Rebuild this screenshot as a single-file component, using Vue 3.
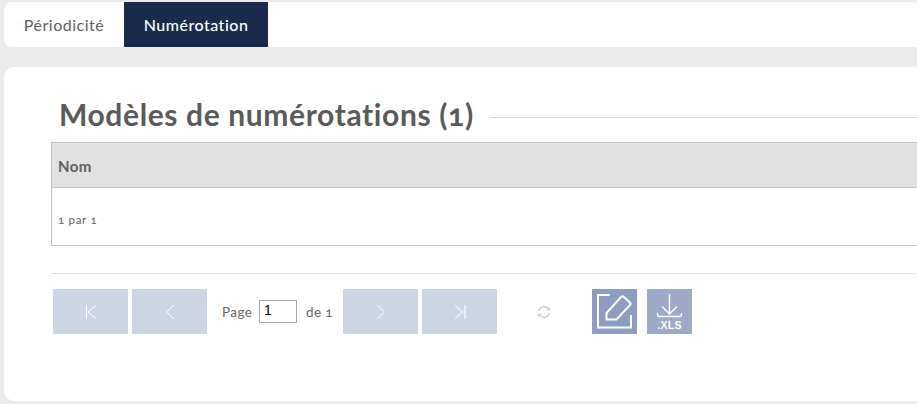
<script setup>
const tabs = [
  { label: 'Périodicité', active: false },
  { label: 'Numérotation', active: true }
]
</script>

<template>
  <div class="page">
    <nav class="tabs">
      <div v-for="t in tabs" :key="t.label" class="tab" :class="{ active: t.active }">{{ t.label }}</div>
    </nav>
    <main class="card">
      <div class="title-row">
        <h1 class="title">Modèles de numérotations (1)</h1>
        <div class="title-line"></div>
      </div>
      <div class="grid">
        <div class="grid-head">Nom</div>
        <div class="grid-foot">1 par 1</div>
      </div>
      <div class="sep"></div>
      <div class="pager">
        <button class="pg">
          <svg width="14" height="16" viewBox="0 0 14 16" fill="none" stroke="#fff" stroke-width="1"><path d="M2.500 1v14M12 1.500 4 8l8 6.500"/></svg>
        </button>
        <button class="pg">
          <svg width="14" height="16" viewBox="0 0 14 16" fill="none" stroke="#fff" stroke-width="1"><path d="M11 1 3.500 8l7.500 7"/></svg>
        </button>
        <span class="lbl page-lbl">Page</span>
        <input class="page-input" value="1" />
        <span class="lbl of-lbl">de 1</span>
        <button class="pg">
          <svg width="14" height="16" viewBox="0 0 14 16" fill="none" stroke="#fff" stroke-width="1"><path d="M3 1l7.500 7L3 15"/></svg>
        </button>
        <button class="pg">
          <svg width="14" height="16" viewBox="0 0 14 16" fill="none" stroke="#fff" stroke-width="1"><path d="M2 1.500 10 8l-8 6.500M12 1v14"/></svg>
        </button>
        <svg class="refresh" width="14" height="14" viewBox="0 0 16 16" fill="none" stroke="#b9c3d8" stroke-width="1.200">
          <path d="M2 7a6 6 0 0 1 10.500-3L14 5.500M14 2.500v3h-3"/>
          <path d="M14 9a6 6 0 0 1-10.500 3L2 10.500M2 13.500v-3h3"/>
        </svg>
        <button class="act edit">
          <svg width="45" height="45" viewBox="0 0 45 45" fill="none" stroke="#fff" stroke-width="2">
            <path d="M18 6H6v32.500h33V26"/>
            <path d="M14.500 24 29 8a2 2 0 0 1 2.800-.1l6 5.500a2 2 0 0 1 .1 2.800L24.500 30.500h-10z"/>
          </svg>
        </button>
        <button class="act xls">
          <svg class="xls-ico" width="45" height="29" viewBox="0 0 45 29" fill="none" stroke="#fff" stroke-width="1.400">
            <path d="M22.500 4v20M15 16.500l7.500 7.500 7.500-7.500"/>
            <path d="M10.500 23v1.500a2 2 0 0 0 2 2h20a2 2 0 0 0 2-2V23"/>
          </svg>
          <span class="xls-text">.XLS</span>
        </button>
      </div>
    </main>
  </div>
</template>

<style>
html, body { margin: 0; background: #ebebeb; overflow: hidden; }
</style>

<style scoped>
.page {
  width: 917px;
  height: 404px;
  background: #ebebeb;
  padding: 2px 0 0 4px;
  box-sizing: border-box;
  overflow: hidden;
  font-family: Lato, "Liberation Sans", sans-serif;
  color: #5b5b5b;
  font-variant-numeric: oldstyle-nums;
}
.tabs {
  display: flex;
  height: 45px;
  background: #fff;
  border-radius: 8px 0 0 8px;
  margin-bottom: 20px;
}
.tab {
  display: flex;
  align-items: center;
  justify-content: center;
  font-size: 16px;
  letter-spacing: 0.5px;
  width: 120px;
  color: #5d5d5d;
}
.tab.active {
  width: 144px;
  background: #1a2a4b;
  color: #fff;
  font-weight: 500;
}
.card {
  height: 334px;
  background: #fff;
  border-radius: 10px 0 0 10px;
  padding: 30px 0 0 47px;
  box-sizing: border-box;
}
.title-row {
  display: flex;
  align-items: center;
  height: 45px;
  padding: 0 0 5px 8px;
  box-sizing: border-box;
}
.title {
  margin: 0 16px 6px 0;
  font-size: 30px;
  line-height: 36px;
  font-weight: 700;
  letter-spacing: 0.62px;
  color: #5a5a5a;
  white-space: nowrap;
}
.title-line {
  flex: 1;
  height: 1px;
  background: #d9d9d9;
}
.grid {
  border: 1px solid #c4c4c4;
  border-right: 0;
  height: 104px;
  box-sizing: border-box;
}
.grid-head {
  height: 44px;
  background: #e1e1e1;
  border-bottom: 1px solid #c4c4c4;
  padding-left: 6px;
  font-size: 15px;
  font-weight: 700;
  line-height: 47px;
  letter-spacing: 0.4px;
  color: #5f5f5f;
}
.grid-foot {
  padding: 25px 0 0 6px;
  font-size: 11.500px;
  line-height: 14px;
  letter-spacing: 0.7px;
  color: #5f5f5f;
}
.sep {
  height: 1px;
  background: #e2e2e2;
  margin-top: 27px;
}
.pager {
  display: flex;
  align-items: center;
  margin-top: 15px;
  padding-left: 2px;
}
button {
  border: 0;
  padding: 0;
  display: flex;
  align-items: center;
  justify-content: center;
}
.pg {
  width: 75px;
  height: 45px;
  background: #cdd5e4;
  margin-right: 4px;
}
.lbl {
  font-size: 13.500px;
  letter-spacing: 0.4px;
  color: #666;
}
.page-lbl { width: 31px; margin-left: 11px; margin-right: 6px; white-space: nowrap; }
.of-lbl { width: 25px; margin-left: 9px; margin-right: 12px; white-space: nowrap; }
.page-input {
  width: 38px;
  height: 23px;
  box-sizing: border-box;
  border: 1px solid #a8a8a8;
  padding: 0 4px 3px;
  font: 14px "Liberation Sans", sans-serif;
  color: #000;
  background: #fff;
}
.refresh { margin-left: 36px; margin-right: 41px; }
.act { width: 45px; height: 45px; }
.edit { background: #8c9dc0; margin-right: 10px; }
.xls {
  background: #9da9c7;
  flex-direction: column;
  justify-content: flex-start;
  color: #fff;
}
.xls-ico { display: block; margin-top: 1px; flex: none; }
.xls-text {
  font: 700 10.500px/12px "Liberation Sans", sans-serif;
  letter-spacing: 0.3px;
  color: #fff;
}
</style>
